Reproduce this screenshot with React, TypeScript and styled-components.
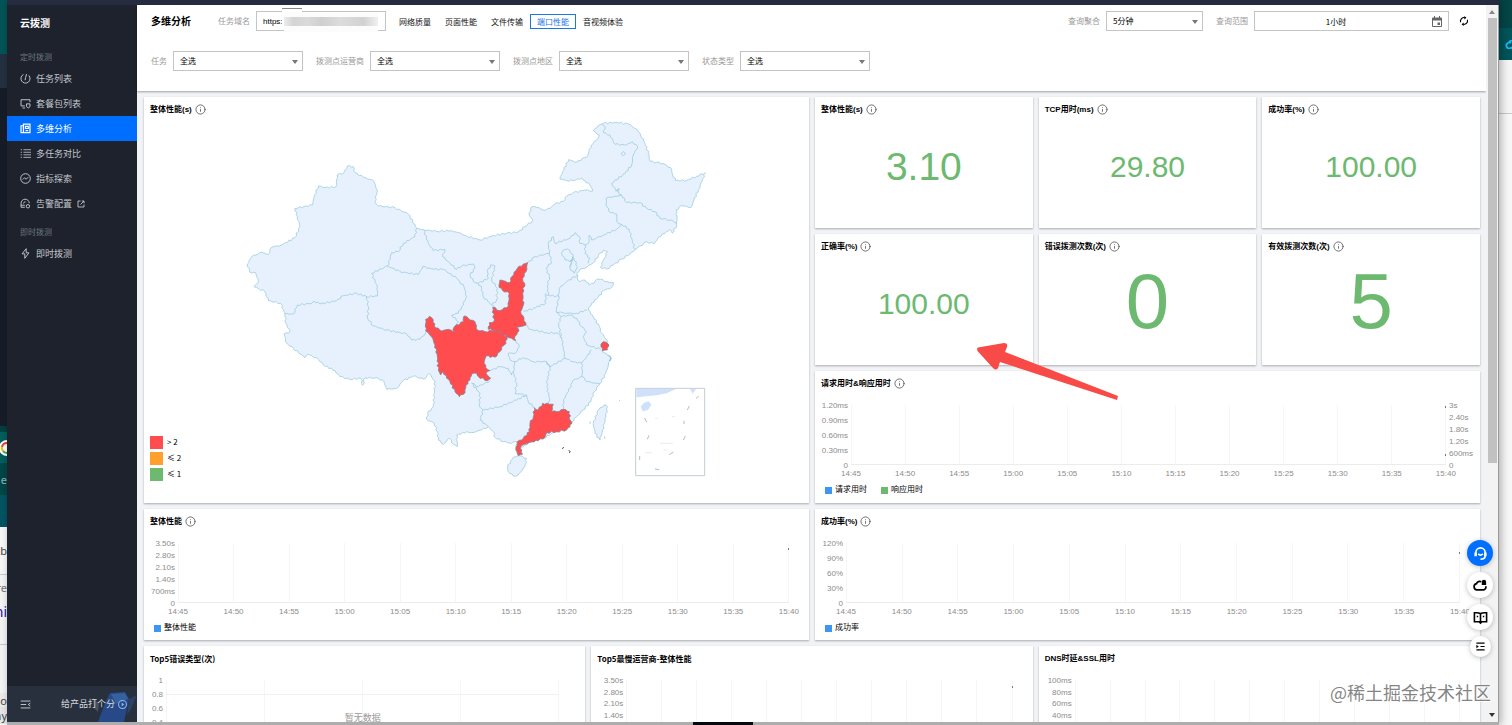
import React from 'react';
import styled, { createGlobalStyle, css } from 'styled-components';
import { Info } from 'lucide-react';

const latin = '"Liberation Sans", "Noto Sans CJK SC", sans-serif';
const cjk = '"Noto Sans CJK SC", "Liberation Sans", sans-serif';

const Global = createGlobalStyle`
  * { box-sizing: border-box; }
  body { margin: 0; overflow: hidden; font-family: ${latin}; font-size: 8px; color: #000; }
  button, input, select { font: inherit; color: inherit; margin: 0; }
  p, h1, h2 { margin: 0; }
`;

/* ---------- desktop and window frame ---------- */

const Desktop = styled.div`
  position: relative;
  display: grid;
  grid-template-columns: 7px minmax(0, 1fr) 13px;
  height: 100vh;
  overflow: hidden;
  background: #f7f7f8;
`;

const Strip = styled.div`
  display: flex;
  flex-direction: column;
  overflow: hidden;
`;

const Block = styled.div<{ $h: number; $bg: string; $fg?: string; $size?: number; $line?: boolean }>`
  flex: none;
  display: flex;
  align-items: center;
  justify-content: flex-end;
  height: ${p => p.$h}px;
  background: ${p => p.$bg};
  color: ${p => p.$fg || '#444'};
  font: ${p => p.$size || 12}px/1 "Noto Sans", sans-serif;
  white-space: nowrap;
  border-bottom: ${p => (p.$line ? '1px solid #c9c9c9' : '0')};
`;

const AppWindow = styled.div`
  display: flex;
  flex-direction: column;
  min-height: 0;
  box-shadow: 2px 0 8px rgba(0, 0, 0, 0.3);
  z-index: 1;
`;

const TopBar = styled.div`
  flex: none;
  height: 5px;
  background: #262c40;
`;

const WindowBody = styled.div`
  flex: 1;
  display: flex;
  min-height: 0;
`;

const BottomEdge = styled.div`
  flex: none;
  display: grid;
  grid-template-columns: 46fr 4fr 50fr;
  height: 3px;
  background: #adadad;
  i:nth-child(2) { background: #05080f; }
`;

/* ---------- sidebar ---------- */

const Sidebar = styled.nav`
  flex: none;
  display: flex;
  flex-direction: column;
  width: 130px;
  background: #1d222c;
  color: #c4c8cd;
`;

const Brand = styled.div`
  height: 36px;
  padding-left: 13px;
  font: bold 10px/36px ${cjk};
  color: #fff;
`;

const Section = styled.div`
  height: 19px;
  margin-top: 6px;
  padding-left: 13px;
  font: 8px/19px ${cjk};
  color: #707680;
`;

const NavItem = styled.a<{ $active?: boolean }>`
  display: flex;
  align-items: center;
  gap: 5px;
  height: 25px;
  padding-left: 13px;
  font: 9px/25px ${cjk};
  text-decoration: none;
  color: ${p => (p.$active ? '#fff' : 'inherit')};
  background: ${p => (p.$active ? '#006eff' : 'transparent')};
`;

const SideFooter = styled.div`
  position: relative;
  display: flex;
  align-items: center;
  justify-content: space-between;
  height: 36px;
  margin-top: auto;
  padding: 0 10px 0 13px;
  background: #28303d;
`;

const Ship = styled.svg`
  position: absolute;
  right: 0;
  bottom: 0;
`;

const RateButton = styled.button`
  position: relative;
  display: flex;
  align-items: center;
  gap: 3px;
  padding: 0;
  border: 0;
  background: none;
  font: 9px/12px ${cjk};
  color: #d5d9de;
  svg { color: #8fb9ee; }
`;

const IconButton = styled.button`
  display: flex;
  padding: 0;
  border: 0;
  background: none;
`;

/* ---------- header ---------- */

const Main = styled.main`
  flex: 1;
  display: flex;
  flex-direction: column;
  min-width: 0;
  background: #f1f3f6;
`;

const Header = styled.header`
  flex: none;
  height: 86px;
  padding: 6px 17px 0 14px;
  background: #fff;
  box-shadow: 0 1px 2px rgba(0, 0, 0, 0.35);
`;

const Bar = styled.div`
  display: flex;
  align-items: center;
  height: 20px;
  margin-bottom: 20px;
`;

const PageTitle = styled.h1`
  font: bold 10px/20px ${cjk};
  margin-right: 27px;
`;

const Label = styled.label`
  margin-right: 6px;
  font: 8px/20px ${cjk};
  color: #999;
  white-space: nowrap;
`;

const boxed = css`
  height: 20px;
  border: 1px solid #c4c4c4;
  border-radius: 0;
  background: #fff;
  font: 8px/18px ${cjk};
  outline: 0;
`;

const Field = styled.div<{ $w: number; $end: number }>`
  position: relative;
  flex: none;
  width: ${p => p.$w}px;
  height: 20px;
  margin-right: ${p => p.$end}px;
`;

const Select = styled.select`
  ${boxed}
  display: block;
  width: 100%;
  padding: 0 6px;
  appearance: none;
`;

const Arrow = styled.span`
  position: absolute;
  right: 5px;
  top: 9px;
  border: 3px solid transparent;
  border-top: 4px solid #777;
  border-bottom: 0;
  pointer-events: none;
`;

const TextInput = styled.input<{ $center?: boolean }>`
  ${boxed}
  display: block;
  width: 100%;
  padding: ${p => (p.$center ? '0 31px 0 0' : '0 6px')};
  text-align: ${p => (p.$center ? 'center' : 'left')};
  font-family: ${p => (p.$center ? cjk : latin)};
`;

const Redaction = styled.div`
  position: absolute;
  left: 28px;
  top: 1px;
  width: 94px;
  height: 20px;
  padding: 5px 0;
  background: #fcfcfc;
  &::before {
    content: '';
    display: block;
    height: 9px;
    background: linear-gradient(90deg, #ececec, #d4d4d4 10%, #dadada 25%, #cfcfcf 40%, #dcdcdc 60%, #d2d2d2 85%, #f0f0f0);
  }
`;

const RedactionLine = styled.div`
  position: absolute;
  left: 26px;
  top: -3px;
  width: 20px;
  height: 4px;
  border-top: 1px solid #888;
  background: #fff;
`;

const CalendarMark = styled.svg`
  position: absolute;
  right: 7px;
  top: 5px;
`;

const Tabs = styled.div`
  display: flex;
  align-items: center;
  margin-right: auto;
`;

const Tab = styled.button<{ $active?: boolean }>`
  height: 15px;
  padding: 0 6px;
  border: 1px solid ${p => (p.$active ? '#1a78e6' : 'transparent')};
  background: none;
  font: 8px/13px ${cjk};
  color: ${p => (p.$active ? '#1a78e6' : '#111')};
  white-space: nowrap;
`;

/* ---------- cards ---------- */

const Board = styled.div`
  flex: 1;
  min-height: 0;
  display: grid;
  grid-template-columns: repeat(6, minmax(0, 1fr));
  grid-template-rows: 131px 131px 132px 131px 131px;
  gap: 6px;
  padding: 6px 6px 0 7px;
  overflow: hidden;
`;

const Card = styled.section<{ $cols?: number; $rows?: number }>`
  position: relative;
  display: flex;
  flex-direction: column;
  grid-column: span ${p => p.$cols || 1};
  grid-row: span ${p => p.$rows || 1};
  background: #fff;
  box-shadow: 0 1px 2px rgba(0, 0, 0, 0.3);
`;

const CardTitle = styled.h2<{ $cjk?: boolean }>`
  display: flex;
  align-items: center;
  gap: 3px;
  height: 24px;
  padding: 1px 0 0 6px;
  font: bold 8px/24px ${p => (p.$cjk ? cjk : latin)};
  white-space: nowrap;
  svg { color: #555; margin-bottom: 1px; }
`;

const Figure = styled.div<{ $size: number }>`
  flex: 1;
  display: flex;
  align-items: center;
  justify-content: center;
  padding-bottom: ${p => (p.$size > 60 ? 22 : 16)}px;
  font-size: ${p => p.$size}px;
  line-height: 1;
  color: #6cb96f;
`;

const MapArea = styled.div`
  display: flex;
  justify-content: center;
  svg { flex: none; }
`;

const MapLegend = styled.ul`
  position: absolute;
  left: 6px;
  bottom: 22px;
  display: grid;
  gap: 3px;
  margin: 0;
  padding: 0;
  list-style: none;
  font: 8px/12px ${cjk};
`;

const Swatch = styled.li<{ $c: string }>`
  display: flex;
  gap: 4px;
  &::before {
    content: '';
    width: 13px;
    height: 13px;
    background: ${p => p.$c};
  }
`;

/* ---------- charts ---------- */

const Plot = styled.div<{ $l: number; $r: number; $h: number }>`
  display: grid;
  grid-template-columns: ${p => p.$l}px minmax(0, 1fr) ${p => p.$r}px;
  grid-template-rows: ${p => p.$h}px 16px;
  margin-top: 10px;
  color: #8c8c8c;
`;

const YAxis = styled.div<{ $right?: boolean }>`
  display: flex;
  flex-direction: column;
  justify-content: space-between;
  padding: 0 3px;
  text-align: ${p => (p.$right ? 'left' : 'right')};
  span { height: 0; line-height: 1px; }
`;

const Area = styled.div`
  position: relative;
  display: flex;
  justify-content: space-between;
  border-bottom: 1px solid #ececec;
  i { width: 1px; background: #f6f6f6; }
`;

const Empty = styled.span`
  position: absolute;
  inset: 0;
  display: flex;
  align-items: center;
  justify-content: center;
  border-top: 1px solid #f0f0f0;
  margin-top: 14px;
  padding-bottom: 9px;
  font: 9px/12px ${cjk};
  color: #999;
`;

const Point = styled.b<{ $top: number }>`
  position: absolute;
  right: 0;
  top: ${p => p.$top}px;
  width: 1px;
  height: 2px;
  background: #777;
`;

const XAxis = styled.div`
  grid-column: 2;
  display: flex;
  justify-content: space-between;
  line-height: 17px;
  span { display: flex; justify-content: center; width: 0; }
`;

const Legend = styled.div`
  display: flex;
  gap: 14px;
  padding-left: 10px;
  font: 8px/16px ${cjk};
`;

const LegendItem = styled.span<{ $c: string }>`
  display: flex;
  align-items: center;
  gap: 3px;
  &::before {
    content: '';
    width: 7px;
    height: 7px;
    margin-top: 2px;
    background: ${p => p.$c};
  }
`;

/* ---------- scroll bar, floating tools, overlays ---------- */

const ScrollTrack = styled.div`
  flex: none;
  display: flex;
  flex-direction: column;
  align-items: center;
  width: 13px;
  padding: 5px 0;
  background: #f3f3f4;
  border-right: 1px solid #999;
`;

const ScrollThumb = styled.div`
  flex: none;
  width: 9px;
  height: 63%;
  margin: 4px 0 auto;
  background: #c1c1c1;
`;

const ScrollArrow = styled.span<{ $down?: boolean }>`
  border: 3px solid transparent;
  ${p => (p.$down ? 'border-top: 4px solid #333; border-bottom: 0;' : 'border-bottom: 4px solid #888; border-top: 0;')}
`;

const FloatTools = styled.div`
  position: absolute;
  right: 19px;
  bottom: 68px;
  z-index: 3;
  display: flex;
  flex-direction: column;
  align-items: center;
  gap: 6px;
`;

const FloatButton = styled.button<{ $primary?: boolean; $small?: boolean }>`
  display: flex;
  align-items: center;
  justify-content: center;
  width: ${p => (p.$small ? 21 : 26)}px;
  height: ${p => (p.$small ? 21 : 26)}px;
  padding: 0;
  border: 0;
  border-radius: 50%;
  background: ${p => (p.$primary ? '#006eff' : '#fff')};
  color: ${p => (p.$primary ? '#fff' : '#000')};
  box-shadow: 0 1px 5px rgba(0, 0, 0, 0.25);
`;

const Pointer = styled.svg`
  position: absolute;
  right: 393px;
  top: 340px;
  z-index: 2;
`;

const Watermark = styled.p`
  position: absolute;
  right: 21px;
  bottom: 20px;
  z-index: 4;
  font: 18px/26px ${cjk};
  color: rgba(110, 110, 110, 0.85);
  text-shadow: 1px 1px 0 #fff;
`;

/* ---------- icons ---------- */

const Glyph = ({ d, size = 10, w = 1.4, fill }: { d: string; size?: number; w?: number; fill?: string }) => (
  <svg width={size} height={size} viewBox="0 0 16 16" fill="none" stroke="currentColor" strokeWidth={w} aria-hidden>
    <path d={d} />
    {fill && <path d={fill} fill="currentColor" stroke="none" />}
  </svg>
);

const icons = {
  gauge: 'M5 2.200A6.600 6.600 0 1 0 12.800 3.600M7.500 10.500C7.500 8 8.500 6 9.500 1.500',
  pack: 'M7 11.500H1.500V2.500h13V6M3.500 14.500h4M9.500 8.500h5v4L12 14.500 9.500 12.500z',
  multi: 'M5 14H1.500V4H5M5 1.800h9.500V14H5zM8 5h4v3H8zM8 11h4',
  list: 'M5 2.500h11M5 6.200h11M5 9.900h11M5 13.600h11M1 2.500h2M1 6.200h2M1 9.900h2M1 13.600h2',
  metric: 'M8 1a7 7 0 1 0 0 14A7 7 0 0 0 8 1M4 9.500l2.500-2.500 2.500 2 3-3',
  alarm: 'M7 13.500H1.500V8A6 6 0 0 1 13.500 7.500M1.500 10.500H7M5 8a3 3 0 0 1 3-2.500M9 12a2.500 2.500 0 1 0 5 0a2.500 2.500 0 1 0-5 0',
  link: 'M7 2H2v12h12V9M9.500 2H14v4.500M14 2L7 9',
  bolt: 'M9 1L3 8.500h4V15l6-8H9z',
  collapse: 'M1 3h14M1 8h8M1 13h14M15 6l-3 2 3 2',
  play: 'M8 1a7 7 0 1 0 0 14A7 7 0 0 0 8 1',
  sync: 'M2.500 10A6 6 0 0 1 9 2.500M13.500 6A6 6 0 0 1 7 13.500',
};

/* ---------- map ---------- */

type Pt = [number, number];

const parse = (s: string): Pt[] => s.trim().split(/\s+/).map(t => t.split(',').map(Number) as Pt);

/* Breaks straight runs into small wiggles so that borders look surveyed. */
const border = (s: string, close = false) => {
  const pts = parse(s);
  if (close) pts.push(pts[0]);
  let d = `M${pts[0].join(' ')}`;
  for (let i = 1; i < pts.length; i++) {
    const [x0, y0] = pts[i - 1];
    const [x1, y1] = pts[i];
    const len = Math.hypot(x1 - x0, y1 - y0);
    const n = Math.max(1, Math.round(len / 7));
    for (let k = 1; k < n; k++) {
      const t = k / n;
      const j = Math.sin(x0 * 12.9 + y0 * 78.2 + x1 * 3.7 + k * 41.3) * 2.6;
      d += `L${(x0 + (x1 - x0) * t - ((y1 - y0) / len) * j).toFixed(1)} ${(y0 + (y1 - y0) * t + ((x1 - x0) / len) * j).toFixed(1)}`;
    }
    d += `L${x1} ${y1}`;
  }
  return close ? d + 'Z' : d;
};

const mainland = `551,359 590,364 635,362 655,368 680,378 720,390 760,377 800,370 835,366 855,350 878,332 868,315 874,291 890,292 910,300 930,295 945,282 970,274 980,258 1000,248 1035,240 1058,243 1050,225 1035,212 1025,204 1000,212 980,212 960,207 968,185 986,149 1008,157 1035,143 1042,140 1048,118 1060,100 1074,85 1078,76 1060,62 1075,46 1090,40 1130,37 1165,42 1190,57 1202,75 1215,100 1225,130 1230,154 1250,157 1275,163 1295,178 1298,195 1307,212 1340,211 1370,199 1396,188 1387,212 1375,240 1362,270 1353,292 1325,287 1308,300 1311,325 1310,345 1297,370 1290,358 1275,370 1255,382 1242,402 1220,395 1200,408 1185,418 1170,432 1145,447 1120,465 1100,477 1081,472 1090,452 1103,425 1090,420 1075,437 1060,458 1040,472 1020,478 1010,490 1012,505 1020,515 1035,510 1048,525 1062,520 1070,508 1081,507 1095,515 1120,518 1115,532 1090,542 1075,562 1055,580 1045,600 1060,620 1078,650 1085,670 1102,692 1105,710 1085,723 1100,730 1112,745 1105,765 1098,790 1080,820 1063,845 1052,875 1030,900 1010,920 995,938 980,955 940,968 910,985 880,993 855,1005 842,1015 846,1032 835,1037 828,1020 830,995 815,1000 790,995 765,982 760,965 745,950 725,960 695,968 680,965 650,975 652,1010 640,1003 628,985 610,1003 595,990 592,965 583,940 560,928 563,910 580,890 583,850 585,815 567,790 552,808 520,798 490,812 470,835 440,838 432,815 415,805 375,803 368,826 362,805 330,808 300,800 285,782 250,765 235,748 205,733 195,743 160,715 140,700 132,672 150,665 138,640 135,612 122,580 85,572 75,545 42,530 55,515 48,490 28,485 22,462 35,440 65,427 85,433 95,412 125,405 165,383 180,350 172,320 165,295 218,285 222,262 235,228 255,233 288,230 292,195 312,188 322,168 340,170 345,188 370,202 400,212 412,240 405,275 415,288 465,293 505,312 530,355`;

const west = [
  '530,355 525,380 490,400 475,425 455,428 443,468 395,490 412,530 412,558 380,560',
  '135,612 160,612 172,585 215,580 222,573 240,582 290,572 310,557 350,550 380,560',
  '380,560 385,590 383,625 400,648 440,660 500,672 515,690 540,688 555,672 560,660',
  '443,468 480,485 535,494 548,470 580,478 610,478 650,505 672,530 680,560 665,590 655,610 635,615 655,635 650,655',
  '551,359 565,400 580,422 615,418 608,440 650,478 665,468 700,462 705,475 690,495 700,515 715,520',
];

const north = [
  '172,460 195,440 238,430 245,455 228,475 238,500 232,530 235,555',
  '238,430 235,400 250,380 255,400 300,385 315,368 328,380 330,400 345,405',
  '345,405 358,395 357,375 365,390 400,375 440,358 455,343 478,358 485,385 495,418',
  '345,405 345,430 360,445 355,460',
  '275,430 285,418 300,422 310,440 300,455 285,450 275,430',
  '300,455 312,445 322,470 312,490 300,475 308,440 302,470',
  '455,343 440,335 440,312 422,308 410,290 408,265 425,262 455,255',
  '437,240 455,255 470,278 510,278 530,295 555,305 570,325 600,330 622,340',
  '437,240 425,220 465,190 485,165 490,135 503,110 487,95 470,105 435,103 420,75 400,68 405,50 395,42',
  '437,245 448,236 440,243',
  '453,131 460,125 467,131 460,138 453,131',
];

const south = [
  '235,100 265,85 262,65 272,45 285,48 275,90 292,115 290,150 275,165 250,140 245,115 235,100',
  '275,165 285,172',
  '437,130 437,160 400,175 370,185',
  '532,75 500,95 478,115 475,150 468,185 500,190 530,190 560,180',
  '438,135 478,140',
  '378,225 390,238 440,248 475,250 485,265',
  '468,185 485,200 475,220 485,265 490,290 495,325 520,335 545,340 560,320 575,300',
  '485,200 510,195 530,205 545,230 560,245 550,260 560,285 603,298',
  '347,272 358,290 345,310 325,310 330,330 345,335 370,322 400,335 440,335 450,350 495,325',
  '345,335 340,365 350,400 345,430 380,435 385,455 403,473',
  '440,335 450,355 443,380 440,410 450,450 445,463',
  '545,340 548,380 520,390 505,425 490,450 490,478',
  '548,380 560,395 590,400 600,400',
  '270,362 300,350 325,355 335,375 340,365',
  '215,400 235,410 270,392',
  '215,400 240,430 238,470 250,480 300,470 350,450 380,435',
  '250,480 240,510 265,530',
];

const alerts = [
  '77,208 88,199 100,210 103,228 125,243 145,238 160,246 163,230 190,215 192,198 205,205 225,215 232,240 255,245 285,240 305,248 320,260 318,280 305,290 300,305 285,322 258,318 252,340 262,358 270,362 258,370 272,385 262,392 235,380 230,370 215,372 210,390 198,405 195,428 178,440 165,425 150,395 140,385 130,365 122,375 115,360 112,320 105,285 98,265 85,248 77,243',
  '383,38 378,65 368,85 374,100 368,130 370,165 362,185 372,205 378,225 360,230 350,232 357,243 345,258 347,272 335,265 320,260 305,248 285,240 265,238 268,218 282,215 278,172 300,182 325,168 328,130 308,122 297,112 300,90 330,98 335,80 352,55 370,42',
  '403,473 415,480 428,460 460,463 455,485 470,485 490,478 508,485 510,510 516,520 500,540 470,545 440,548 435,562 415,572 395,575 372,583 360,595 368,612 355,617 348,600 352,575 370,565 388,545 390,520 400,500',
  '603,282 610,275 625,282 622,300 608,303',
];

const islands = [
  '323,650 340,622 360,617 380,625 375,650 355,675 340,678 325,665',
  '600,570 585,550 580,520 595,480 612,465 622,470 618,500 608,540',
];

const ChinaMap = () => (
  <svg width="480" height="360" viewBox="-9 33 1440 1080" strokeWidth="2.4" strokeLinejoin="round" role="img" aria-label="整体性能">
    <path d={border(mainland, true)} fill="#e7f0fd" stroke="#9ccddd" />
    <g fill="none" stroke="#9ccddd">
      {west.map(s => <path key={s} d={border(s)} />)}
      <g transform="translate(690 0)">{north.map(s => <path key={s} d={border(s)} />)}</g>
      <g transform="translate(480 420)">{south.map(s => <path key={s} d={border(s)} />)}</g>
    </g>
    <g transform="translate(480 420)">
      {islands.map(s => <path key={s} d={border(s, true)} fill="#e7f0fd" stroke="#9ccddd" />)}
      {alerts.map(s => <path key={s} d={border(s, true)} fill="#ff4d4f" stroke="#8a7f90" />)}
      <path d="M625 315l8 6-4 12 6-8M570 515v6M614 560v6M657 452h3" stroke="#7fc0d8" fill="none" />
      <path d="M487 597l4-6M506 600l5 6-4 2" stroke="#555" fill="none" strokeWidth="3" />
      <rect x="707" y="415" width="207" height="262" fill="#fff" stroke="#c3ccd4" strokeWidth="3" />
      <path d="M709 417H828L800 430 770 436 709 442zM722 470l10-12 14-4 8 10-10 16-16 4zM870 417h18l-10 14z" fill="#cfe1fa" />
      <path d="M888 445l8-6M862 480l6-12M852 512v10M734 504l6 12M742 568l5-12M850 570l6-12M808 614l12-8M719 618v12M765 657l12 2" stroke="#aaa" fill="none" />
      <path d="M765 505h8M815 500h10M780 580h40M735 608h20M790 600h12" stroke="#dcebee" fill="none" />
    </g>
  </svg>
);

/* ---------- building blocks ---------- */

const times = ['14:45', '14:50', '14:55', '15:00', '15:05', '15:10', '15:15', '15:20', '15:25', '15:30', '15:35', '15:40'];

const Title = ({ text, info = true, wide }: { text: string; info?: boolean; wide?: boolean }) => (
  <CardTitle $cjk={wide}>
    {text}
    {info && <Info size={11} strokeWidth={1.8} />}
  </CardTitle>
);

type ChartProps = {
  left: number; right: number; height?: number; y: string[]; y2?: string[];
  empty?: boolean; points?: number[]; legend?: [string, string][];
};

const Chart = ({ left, right, height = 60, y, y2, empty, points = [], legend = [] }: ChartProps) => (
  <>
    <Plot $l={left} $r={right} $h={height}>
      <YAxis>{y.map(v => <span key={v}>{v}</span>)}</YAxis>
      <Area>
        {(empty ? times.slice(0, 5) : times).map(t => <i key={t} />)}
        {points.map(v => <Point key={v} $top={v} />)}
        {empty && <Empty>暂无数据</Empty>}
      </Area>
      <YAxis $right>{y2 && y2.map(v => <span key={v}>{v}</span>)}</YAxis>
      {legend.length > 0 && <XAxis>{times.map(t => <span key={t}>{t}</span>)}</XAxis>}
    </Plot>
    <Legend>{legend.map(([name, c]) => <LegendItem key={name} $c={c}>{name}</LegendItem>)}</Legend>
  </>
);

const Picker = ({ id, label, value, width = 130, end = 13 }: { id: string; label: string; value: string; width?: number; end?: number }) => (
  <>
    <Label htmlFor={id}>{label}</Label>
    <Field $w={width} $end={end}>
      <Select id={id}><option>{value}</option></Select>
      <Arrow />
    </Field>
  </>
);

const figures: [string, string, number][] = [
  ['整体性能(s)', '3.10', 39],
  ['TCP用时(ms)', '29.80', 30],
  ['成功率(%)', '100.00', 30],
  ['正确率(%)', '100.00', 30],
  ['错误拨测次数(次)', '0', 78],
  ['有效拨测次数(次)', '5', 78],
];

const blue = '#3d97f2';
const green = '#6cb96f';

export default function App() {
  return (
    <Desktop>
      <Global />
      <Strip>
        <Block $h={54} $bg="#005556" />
        <Block $h={34} $bg="#243040" />
        <Block $h={338} $bg="#171d28" />
        <Block $h={6} $bg="#003f40" />
        <Block $h={31} $bg="#005f5c">
          <svg width="7" height="16" viewBox="0 0 7 16">
            <circle cx="7" cy="8" r="8" fill="#fff" />
            <path d="M7 3a5 5 0 0 0-5 4" stroke="#ea4335" strokeWidth="2" fill="none" />
            <path d="M2 7v2l1 2" stroke="#fbbc05" strokeWidth="2" fill="none" />
            <path d="M3 11a5 5 0 0 0 4 2" stroke="#34a853" strokeWidth="2" fill="none" />
          </svg>
        </Block>
        <Block $h={32} $bg="#004647" $fg="#8fb5b5" $size={11}>e</Block>
        <Block $h={32} $bg="#005562" />
        <Block $h={48} $bg="#f7f7f8" $size={11} $line>kb</Block>
        <Block $h={24} $bg="#f4f4f5" $fg="#777" $size={11}>re</Block>
        <Block $h={25} $bg="#f4f4f5" $fg="#1a0dab" $size={14}>ni</Block>
        <Block $h={21} $bg="#f4f4f5" $line />
        <Block $h={48} $bg="#f4f4f5" />
        <Block $h={14} $bg="#ececed" $size={11}>o</Block>
        <Block $h={17} $bg="#e6e6e7" $size={11}>my</Block>
      </Strip>

      <AppWindow>
        <TopBar />
        <WindowBody>
          <Sidebar>
            <Brand>云拨测</Brand>
            <Section>定时拨测</Section>
            <NavItem href="#tasks"><Glyph d={icons.gauge} size={11} />任务列表</NavItem>
            <NavItem href="#packs"><Glyph d={icons.pack} size={11} />套餐包列表</NavItem>
            <NavItem href="#analysis" $active><Glyph d={icons.multi} size={11} w={1.8} />多维分析</NavItem>
            <NavItem href="#compare"><Glyph d={icons.list} size={11} w={1.2} />多任务对比</NavItem>
            <NavItem href="#metrics"><Glyph d={icons.metric} size={11} />指标探索</NavItem>
            <NavItem href="#alarm"><Glyph d={icons.alarm} size={11} />告警配置<Glyph d={icons.link} size={8} w={1.8} /></NavItem>
            <Section>即时拨测</Section>
            <NavItem href="#instant"><Glyph d={icons.bolt} size={11} />即时拨测</NavItem>
            <SideFooter>
              <Ship width="44" height="36" viewBox="0 0 44 36">
                <path d="M5 36L12 17 17 7 32 6 36 13 31 36z" fill="#27509a" opacity="0.8" />
                <path d="M18 8l14-1 3 6-12 5z" fill="#35619f" />
                <path d="M36 13l8-4-6 14-4 6z" fill="#2c4166" />
                <path d="M0 12l6 6-1 8-4-4z" fill="#47505e" />
              </Ship>
              <IconButton aria-label="收起菜单"><Glyph d={icons.collapse} size={11} /></IconButton>
              <RateButton>给产品打个分<Glyph d={icons.play} size={9} w={1.8} fill="M6.500 4.500L11 8 6.500 11.500z" /></RateButton>
            </SideFooter>
          </Sidebar>

          <Main>
            <Header>
              <Bar>
                <PageTitle>多维分析</PageTitle>
                <Label htmlFor="domain">任务域名</Label>
                <Field $w={130} $end={6}>
                  <TextInput id="domain" defaultValue="https:" />
                  <RedactionLine />
                  <Redaction />
                </Field>
                <Tabs>
                  <Tab>网络质量</Tab>
                  <Tab>页面性能</Tab>
                  <Tab>文件传输</Tab>
                  <Tab $active>端口性能</Tab>
                  <Tab>音视频体验</Tab>
                </Tabs>
                <Picker id="step" label="查询聚合" value="5分钟" width={97} end={13} />
                <Label htmlFor="range">查询范围</Label>
                <Field $w={195} $end={10}>
                  <TextInput id="range" defaultValue="1小时" $center />
                  <CalendarMark width="10" height="11" viewBox="0 0 20 22">
                    <path d="M1 4h18v17H1zM5 0v5M15 0v5" fill="none" stroke="#666" strokeWidth="2" />
                    <path d="M1 4h18v5H1zM11 13h5v5h-5z" fill="#666" />
                  </CalendarMark>
                </Field>
                <IconButton aria-label="刷新">
                  <Glyph d={icons.sync} size={10} w={1.8} fill="M8.500 0L12 2.800 8.500 5.600zM7.500 16L4 13.200 7.500 10.400z" />
                </IconButton>
              </Bar>
              <Bar>
                <Picker id="task" label="任务" value="全选" />
                <Picker id="isp" label="拨测点运营商" value="全选" />
                <Picker id="region" label="拨测点地区" value="全选" />
                <Picker id="state" label="状态类型" value="全选" />
              </Bar>
            </Header>

            <Board>
              <Card $cols={3} $rows={3}>
                <Title text="整体性能(s)" />
                <MapArea><ChinaMap /></MapArea>
                <MapLegend>
                  <Swatch $c="#ff4d4f">&gt; 2</Swatch>
                  <Swatch $c="#ffa02c">≤ 2</Swatch>
                  <Swatch $c={green}>≤ 1</Swatch>
                </MapLegend>
              </Card>
              {figures.map(([name, value, size]) => (
                <Card key={name}>
                  <Title text={name} />
                  <Figure $size={size}>{value}</Figure>
                </Card>
              ))}
              <Card $cols={3}>
                <Title text="请求用时&响应用时" />
                <Chart
                  left={36} right={34} points={[1, 49]}
                  y={['1.20ms', '0.90ms', '0.60ms', '0.30ms', '0']}
                  y2={['3s', '2.40s', '1.80s', '1.20s', '600ms', '0']}
                  legend={[['请求用时', blue], ['响应用时', green]]}
                />
              </Card>
              <Card $cols={3}>
                <Title text="整体性能" />
                <Chart
                  left={34} right={20} points={[5]}
                  y={['3.50s', '2.80s', '2.10s', '1.40s', '700ms', '0']}
                  legend={[['整体性能', blue]]}
                />
              </Card>
              <Card $cols={3}>
                <Title text="成功率(%)" />
                <Chart
                  left={31} right={20} points={[9]}
                  y={['120%', '90%', '60%', '30%', '0']}
                  legend={[['成功率', blue]]}
                />
              </Card>
              <Card $cols={2}>
                <Title text="Top5错误类型(次)" info={false} wide />
                <Chart left={22} right={26} height={70} empty y={['1', '0.8', '0.6', '0.4', '0.2', '0']} />
              </Card>
              <Card $cols={2}>
                <Title text="Top5最慢运营商-整体性能" info={false} wide />
                <Chart left={35} right={20} height={58} points={[6]} y={['3.50s', '2.80s', '2.10s', '1.40s', '700ms', '0']} />
              </Card>
              <Card $cols={2}>
                <Title text="DNS时延&SSL用时" info={false} />
                <Chart left={36} right={20} height={58} y={['100ms', '80ms', '60ms', '40ms', '20ms', '0']} />
              </Card>
            </Board>
          </Main>

          <ScrollTrack>
            <ScrollArrow />
            <ScrollThumb />
            <ScrollArrow $down />
          </ScrollTrack>
        </WindowBody>
        <BottomEdge><i /><i /><i /></BottomEdge>
      </AppWindow>

      <Strip>
        <Block $h={28} $bg="#044546" />
        <Block $h={32} $bg="#005459">
          <svg width="7" height="9" viewBox="0 0 7 9"><path d="M6 3a3 3 0 1 0 1 4M4 2l3-2" stroke="#19b5f0" fill="none" strokeWidth="2" /></svg>
        </Block>
        <Block $h={54} $bg="#f5f5f6" $line />
      </Strip>

      <Pointer width="142" height="62" viewBox="977 340 142 62">
        <path d="M978 347.500L1004 343Q1008 343 1007 347L1005 352 1118 396 1117 400 1000 362 998 368Q996 371 993 368L977.500 351Q976.500 348 978 347.500z" fill="#f84a46" />
      </Pointer>
      <FloatTools>
        <FloatButton $primary aria-label="在线客服">
          <Glyph size={15} w={1.8} d="M3 10V7a5 5 0 0 1 10 0v3c0 3-2 4-5 4M5.500 8.500q2.500 2.500 5 0" fill="M1.500 7h2.500v4H1.500zM12 7h2.500v4H12z" />
        </FloatButton>
        <FloatButton aria-label="云助手">
          <Glyph size={14} w={2} d="M9.500 4.200A4 4 0 0 0 4 6.500 3.600 3.600 0 0 0 4 13.500h8a3 3 0 0 0 2.500-4" fill="M12.500 2a2.500 2.500 0 0 1 2.500 2.500V8h-5V4.500A2.500 2.500 0 0 1 12.500 2" />
        </FloatButton>
        <FloatButton aria-label="文档">
          <Glyph size={15} w={1.7} d="M8 4Q6 2.500 1.500 3v9.500h5L8 14l1.500-1.500h5V3Q10 2.500 8 4v9M4 7h1.500M10.500 7H12" />
        </FloatButton>
        <FloatButton $small aria-label="展开">
          <Glyph size={11} w={1.8} d="M2 3h12M8 8h6M2 13h12" fill="M2 5.500L5.500 8 2 10.500z" />
        </FloatButton>
      </FloatTools>
      <Watermark>@稀土掘金技术社区</Watermark>
    </Desktop>
  );
}
